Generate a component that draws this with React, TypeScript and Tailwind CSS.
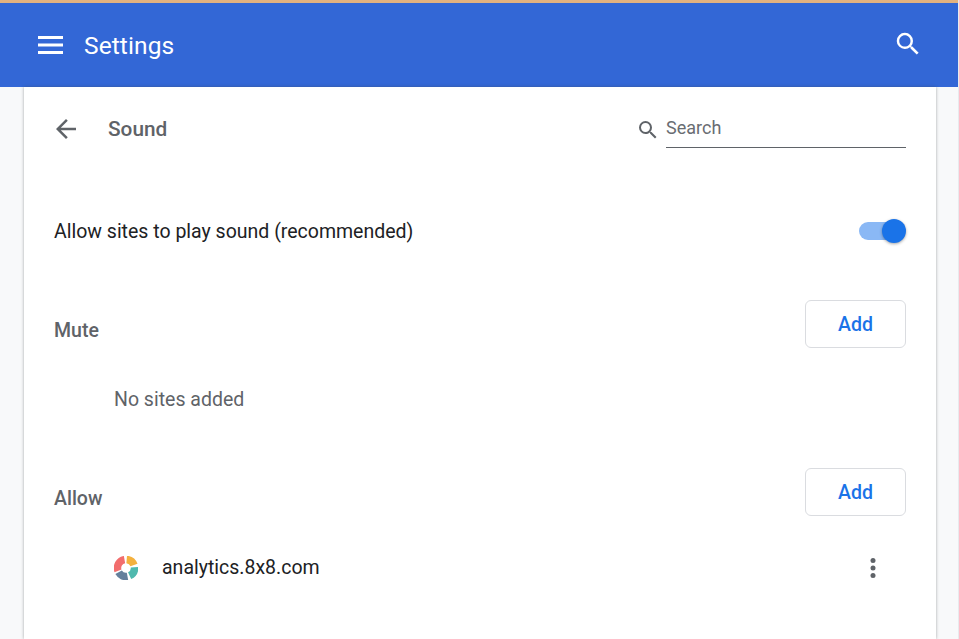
import React from "react";

const SearchIcon = ({ className }: { className: string }) => (
  <svg viewBox="0 0 24 24" className={className} fill="currentColor">
    <path d="M15.5 14h-.79l-.28-.27A6.471 6.471 0 0 0 16 9.5 6.5 6.5 0 1 0 9.5 16c1.61 0 3.09-.59 4.23-1.57l.27.28v.79l5 4.99L20.49 19l-4.99-5zm-6 0C7.01 14 5 11.99 5 9.5S7.01 5 9.5 5 14 7.01 14 9.5 11.99 14 9.5 14z" />
  </svg>
);

const AddButton = () => (
  <button className="w-[101px] h-[48px] pt-[2px] rounded-[6px] border border-[#dadce0] bg-white text-[#1a73e8] text-[19.5px] font-medium">
    Add
  </button>
);

const SiteLogo = () => (
  <svg viewBox="0 0 24 24" className="w-[24px] h-[24px]" fill="none" strokeWidth="7.5">
    <path d="M4 14.9 A8.5 8.5 0 0 1 10.5 3.6" stroke="#f26d6d" />
    <path d="M12.7 3.5 A8.5 8.5 0 0 1 20 9.1" stroke="#f4b13e" />
    <path d="M20.5 11.3 A8.5 8.5 0 0 1 15.6 19.7" stroke="#4fb9ae" />
    <path d="M13.5 20.4 A8.5 8.5 0 0 1 4.6 16.25" stroke="#64809c" />
  </svg>
);

const App = () => {
  return (
    <div
      className="w-[959px] h-[639px] overflow-hidden flex flex-col bg-[#f8f9fa] border-r border-[#e8eaed]"
      style={{ fontFamily: "Roboto, sans-serif" }}
    >
      <header className="h-[87px] shrink-0 border-t-[3px] border-[#e3b27f] bg-[#3367d6] flex items-center pl-[38px] pr-[35px] text-white">
        <svg viewBox="0 0 25 18" className="w-[25px] h-[18px] mr-[21px]" fill="white">
          <rect y="0" width="25" height="3" />
          <rect y="7.5" width="25" height="3" />
          <rect y="15" width="25" height="3" />
        </svg>
        <h1 className="text-[24.5px] flex-1 tracking-[0.1px] mt-[2px]">Settings</h1>
        <SearchIcon className="w-[30px] h-[30px] text-white mb-[2px]" />
      </header>

      <main className="ml-[24px] mr-[22px] flex-1 bg-white shadow-[0_0_3px_rgba(60,64,67,0.45)] pl-[30px] pr-[30px] flex flex-col">
        <div className="h-[84px] flex items-center">
          <svg viewBox="0 0 24 24" className="w-[30px] h-[30px] -ml-[3px] mr-[27px] text-[#5f6368]" fill="currentColor">
            <path d="M20 11H7.83l5.59-5.59L12 4l-8 8 8 8 1.41-1.41L7.83 13H20v-2z" />
          </svg>
          <h2 className="text-[20.8px] font-medium text-[#5f6368] flex-1 mt-[2px]">Sound</h2>
          <div className="flex items-center mb-[2px]">
            <SearchIcon className="w-[24px] h-[24px] text-[#5f6368] mr-[6px] mt-[3px]" />
            <div className="w-[240px] h-[40px] border-b border-[#5f6368] text-[18px] text-[#696d72] flex items-center">
              Search
            </div>
          </div>
        </div>

        <div className="h-[100px] mt-[11px] flex items-center justify-between">
          <span className="text-[19.5px] text-[#202124]">Allow sites to play sound (recommended)</span>
          <div className="relative w-[47px] h-[18px] mb-[2px]">
            <div className="w-[40px] h-[18px] rounded-full bg-[#8ab8f5]" />
            <div className="absolute right-0 top-[-3px] w-[24px] h-[24px] rounded-full bg-[#1a73e8] shadow-[0_1px_3px_rgba(0,0,0,0.35)]" />
          </div>
        </div>

        <div className="h-[48px] mt-[18px] flex items-center justify-between">
          <span className="text-[19.5px] font-medium text-[#5f6368] mt-[14px]">Mute</span>
          <AddButton />
        </div>

        <div className="h-[72px] mt-[16px] pl-[60px] flex items-center text-[19.5px] text-[#5f6368]">No sites added</div>

        <div className="h-[48px] mt-[32px] flex items-center justify-between">
          <span className="text-[19.5px] font-medium text-[#5f6368] mt-[14px]">Allow</span>
          <AddButton />
        </div>

        <div className="h-[72px] mt-[16px] pl-[60px] flex items-center">
          <SiteLogo />
          <span className="ml-[24px] flex-1 text-[19.5px] text-[#202124]">analytics.8x8.com</span>
          <svg viewBox="0 0 6 20" className="w-[6px] h-[20px] mr-[30px] mb-[1px] text-[#5f6368]" fill="currentColor">
            <circle cx="3" cy="2.5" r="2.5" />
            <circle cx="3" cy="10" r="2.5" />
            <circle cx="3" cy="17.5" r="2.5" />
          </svg>
        </div>
      </main>
    </div>
  );
};

export default App;
